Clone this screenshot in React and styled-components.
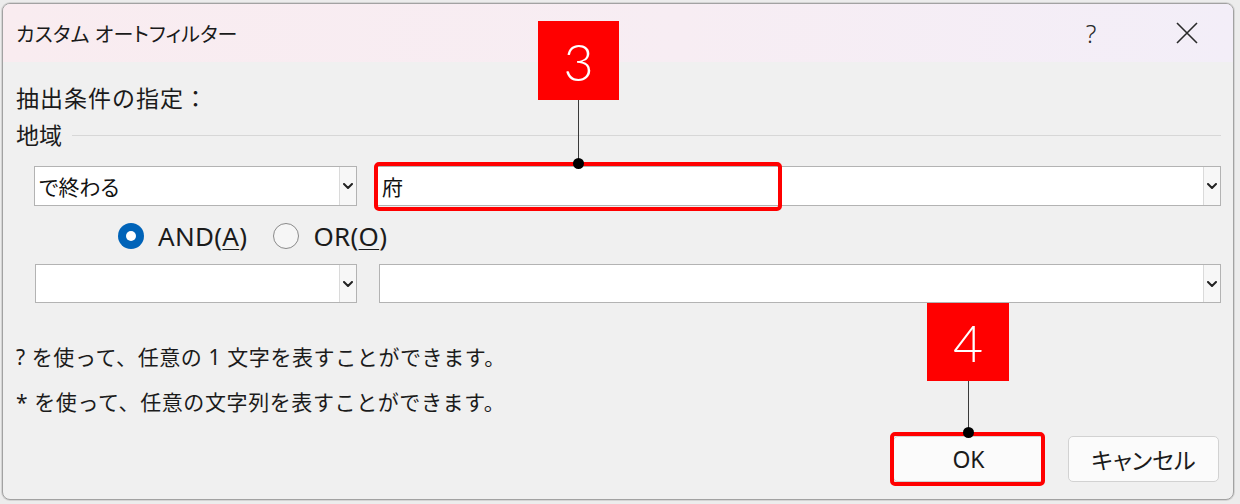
import React from 'react';
import styled, { createGlobalStyle } from 'styled-components';

const GlobalStyle = createGlobalStyle`
  html, body {
    margin: 0;
    padding: 0;
    background: #ececec;
  }
  body {
    font-family: "Noto Sans", "Noto Sans CJK JP", sans-serif;
    color: #1b1b1b;
  }
`;

const Page = styled.div`
  width: 1240px;
  height: 504px;
  box-sizing: border-box;
  padding: 3px 6px 4px 2px;
`;

const Window = styled.div`
  position: relative;
  height: 497px;
  box-sizing: border-box;
  border: 1px solid #a2a2a2;
  border-radius: 8px;
  background: #f0f0f0;
  box-shadow: 0 0 0 1px #d4d4d4;
  overflow: hidden;
  display: flex;
  flex-direction: column;
`;

const TitleBar = styled.div`
  height: 58px;
  flex: none;
  display: flex;
  align-items: center;
  padding: 0 22px 0 13px;
  background: linear-gradient(90deg, #f9ecf0 0%, #f7edf3 55%, #f3eef8 100%);
`;

const Title = styled.div`
  flex: 1;
  font-size: 20px;
  font-feature-settings: "palt";
  letter-spacing: 0.2px;
  color: #1a1a1a;
`;

const TitleButton = styled.div`
  width: 48px;
  height: 40px;
  display: flex;
  align-items: center;
  justify-content: center;
  font-size: 25px;
  font-weight: 300;
  color: #2a2a2a;
  & + & {
    margin-left: 48px;
  }
`;

const Body = styled.div`
  flex: 1;
  display: flex;
  flex-direction: column;
  padding: 0 12px 0 13px;
`;

const Label = styled.div`
  font-size: 23px;
  line-height: 30px;
  height: 30px;
  letter-spacing: ${p => p.$ls || 0}px;
  margin-top: ${p => p.$mt || 0}px;
`;

const GroupRow = styled.div`
  display: flex;
  align-items: center;
  margin-top: 7px;
  height: 30px;
`;

const GroupLine = styled.div`
  flex: 1;
  height: 1px;
  margin-left: 10px;
  background: #d7d7d7;
`;

const ComboRow = styled.div`
  display: flex;
  gap: ${p => p.$gap}px;
  margin-top: ${p => p.$mt}px;
  padding-left: ${p => p.$pl}px;
  height: ${p => p.$h}px;
`;

const Combo = styled.div`
  position: relative;
  display: flex;
  box-sizing: border-box;
  height: 100%;
  width: ${p => (p.$w ? `${p.$w}px` : 'auto')};
  flex: ${p => (p.$w ? 'none' : 1)};
  border: 1px solid #b3b3b3;
  background: #fff;
`;

const ComboText = styled.div`
  flex: 1;
  display: flex;
  align-items: center;
  padding-left: 4px;
  font-size: 21px;
  font-feature-settings: "palt";
  color: #111;
`;

const DropButton = styled.div`
  width: 16px;
  flex: none;
  display: flex;
  align-items: center;
  justify-content: center;
  border-left: 1px solid #dadada;
  background: #f7f7f7;
`;

const Highlight = styled.div`
  position: absolute;
  left: ${p => p.$l}px;
  top: ${p => p.$t}px;
  width: ${p => p.$w}px;
  height: ${p => p.$h}px;
  box-sizing: border-box;
  border: 4px solid #ff0000;
  border-radius: 5px;
  pointer-events: none;
`;

const RadioRow = styled.div`
  display: flex;
  align-items: center;
  margin-top: 15px;
  height: 30px;
  padding-left: 102px;
`;

const RadioItem = styled.label`
  display: flex;
  align-items: center;
  gap: 14px;
  font-size: 26px;
  letter-spacing: 0.3px;
  color: #1b1b1b;
  & + & {
    margin-left: 26px;
  }
  u {
    text-underline-offset: 3px;
    text-decoration-thickness: 1px;
  }
`;

const RadioDot = styled.span`
  width: 26px;
  height: 26px;
  box-sizing: border-box;
  border-radius: 50%;
  display: inline-flex;
  align-items: center;
  justify-content: center;
  background: ${p => (p.$checked ? '#0063b8' : '#f6f6f6')};
  border: ${p => (p.$checked ? 'none' : '1.5px solid #8a8a8a')};
  &::after {
    content: '';
    display: ${p => (p.$checked ? 'block' : 'none')};
    width: 10px;
    height: 10px;
    border-radius: 50%;
    background: #fff;
  }
`;

const Help = styled.div`
  margin-top: 32px;
  font-size: 21px;
  line-height: 45px;
  letter-spacing: 0.6px;
  color: #1b1b1b;
`;

const ButtonRow = styled.div`
  display: flex;
  justify-content: flex-end;
  gap: 24px;
  margin-top: 11px;
  padding-right: 2px;
`;

const Button = styled.div`
  position: relative;
  width: ${p => p.$w}px;
  height: 46px;
  box-sizing: border-box;
  display: flex;
  align-items: center;
  justify-content: center;
  border: 1px solid #d2d2d2;
  border-radius: 5px;
  background: #fbfbfb;
  font-size: 23px;
  font-feature-settings: "palt";
  color: #1b1b1b;
`;

const Callout = styled.div`
  position: absolute;
  left: ${p => p.$l}px;
  top: ${p => p.$t}px;
  display: flex;
  flex-direction: column;
  align-items: center;
  pointer-events: none;
`;

const Badge = styled.div`
  width: ${p => p.$w}px;
  height: ${p => p.$h}px;
  background: #ff0000;
  color: #fff;
  display: flex;
  align-items: center;
  justify-content: center;
  font-family: Lato, "Noto Sans", sans-serif;
  font-weight: 300;
  font-size: 52px;
`;

const Stem = styled.div`
  width: 1px;
  height: ${p => p.$h}px;
  background: #3a3a3a;
`;

const Dot = styled.div`
  width: 11px;
  height: 11px;
  margin-top: -5px;
  border-radius: 50%;
  background: #000;
`;

const Chevron = () => (
  <svg width="10" height="6" viewBox="0 0 10 6">
    <path d="M1 1 L5 5 L9 1" fill="none" stroke="#222" strokeWidth="2" strokeLinecap="round" strokeLinejoin="round" />
  </svg>
);

const CloseIcon = () => (
  <svg width="22" height="22" viewBox="0 0 22 22">
    <path d="M1 1 L21 21 M21 1 L1 21" stroke="#2a2a2a" strokeWidth="1.6" />
  </svg>
);

const ComboBox = ({ w, value, children }) => (
  <Combo $w={w}>
    <ComboText>{value}</ComboText>
    <DropButton>
      <Chevron />
    </DropButton>
    {children}
  </Combo>
);

export default function App() {
  return (
    <Page>
      <GlobalStyle />
      <Window>
        <TitleBar>
          <Title>カスタム オートフィルター</Title>
          <TitleButton>?</TitleButton>
          <TitleButton>
            <CloseIcon />
          </TitleButton>
        </TitleBar>

        <Body>
          <Label $mt={21} $ls={1}>抽出条件の指定：</Label>
          <GroupRow>
            <Label>地域</Label>
            <GroupLine />
          </GroupRow>

          <ComboRow $mt={16} $pl={18} $gap={20} $h={40}>
            <ComboBox w={323} value="で終わる" />
            <ComboBox value="府">
              <Highlight $l={-4} $t={-5} $w={408} $h={49} />
            </ComboBox>
          </ComboRow>

          <RadioRow>
            <RadioItem>
              <RadioDot $checked />
              <span>AND(<u>A</u>)</span>
            </RadioItem>
            <RadioItem>
              <RadioDot />
              <span>OR(<u>O</u>)</span>
            </RadioItem>
          </RadioRow>

          <ComboRow $mt={13} $pl={19} $gap={22} $h={39}>
            <ComboBox w={322} value="" />
            <ComboBox value="" />
          </ComboRow>

          <Help>
            <div>? を使って、任意の 1 文字を表すことができます。</div>
            <div>* を使って、任意の文字列を表すことができます。</div>
          </Help>

          <ButtonRow>
            <Button $w={151}>
              OK
              <Highlight $l={-4} $t={-5} $w={155} $h={54} />
            </Button>
            <Button $w={151}>キャンセル</Button>
          </ButtonRow>
        </Body>

        <Callout $l={535} $t={17}>
          <Badge $w={81} $h={79}>3</Badge>
          <Stem $h={63} />
          <Dot />
        </Callout>
        <Callout $l={924} $t={299}>
          <Badge $w={82} $h={78}>4</Badge>
          <Stem $h={51} />
          <Dot />
        </Callout>
      </Window>
    </Page>
  );
}
